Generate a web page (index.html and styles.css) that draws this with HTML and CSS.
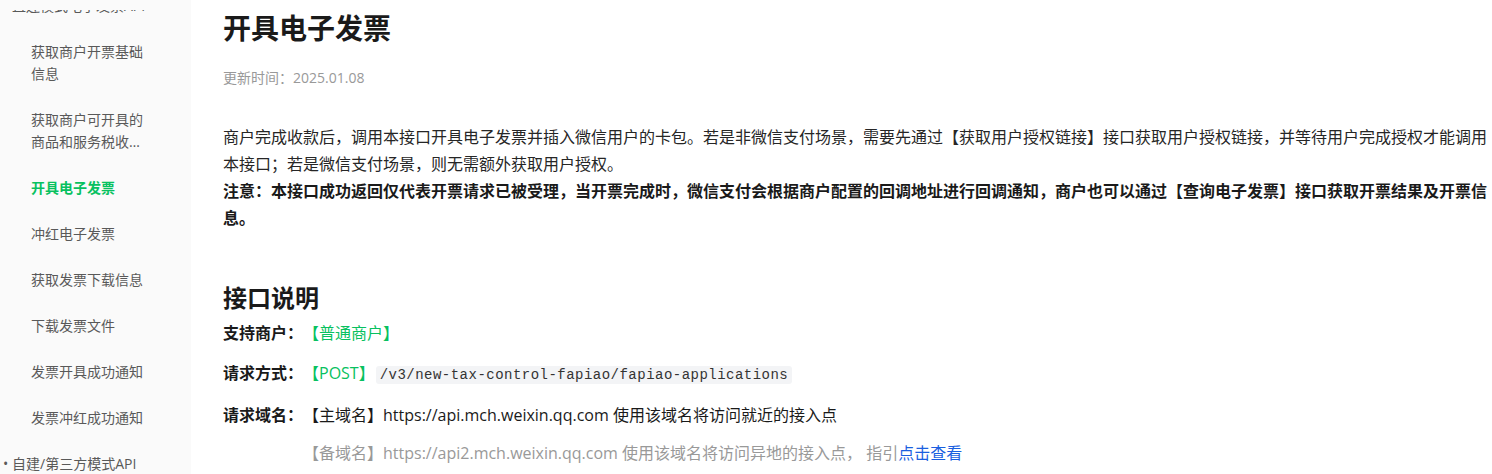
FILE: index.html
```html
<!DOCTYPE html>
<html lang="zh-CN">
<head>
<meta charset="utf-8">
<title>开具电子发票</title>
<link rel="stylesheet" href="styles.css">
</head>
<body>
<div class="page">
  <aside class="sidebar">
    <div class="sidebar-mask"></div>
    <ul class="nav">
      <li class="nav-cat"><span class="dot">•</span><span>直连模式电子发票API</span></li>
      <li class="nav-item"><span class="clamp">获取商户开票基础信息</span></li>
      <li class="nav-item"><span class="clamp">获取商户可开具的商品和服务税收分类编码</span></li>
      <li class="nav-item active"><span class="clamp">开具电子发票</span></li>
      <li class="nav-item"><span class="clamp">冲红电子发票</span></li>
      <li class="nav-item"><span class="clamp">获取发票下载信息</span></li>
      <li class="nav-item"><span class="clamp">下载发票文件</span></li>
      <li class="nav-item"><span class="clamp">发票开具成功通知</span></li>
      <li class="nav-item"><span class="clamp">发票冲红成功通知</span></li>
      <li class="nav-cat"><span class="dot">•</span><span>自建/第三方模式API</span></li>
    </ul>
  </aside>
  <main class="content">
    <h1 class="title">开具电子发票</h1>
    <div class="meta">更新时间：2025.01.08</div>
    <p class="desc">商户完成收款后，调用本接口开具电子发票并插入微信用户的卡包。若是非微信支付场景，需要先通过【获取用户授权链接】接口获取用户授权链接，并等待用户完成授权才能调用本接口；若是微信支付场景，则无需额外获取用户授权。<br><strong>注意：本接口成功返回仅代表开票请求已被受理，当开票完成时，微信支付会根据商户配置的回调地址进行回调通知，商户也可以通过【查询电子发票】接口获取开票结果及开票信息。</strong></p>
    <h2 class="section">接口说明</h2>
    <div class="row"><strong>支持商户：</strong><span class="green">【普通商户】</span></div>
    <div class="row"><strong>请求方式：</strong><span class="green">【POST】</span><code class="code">/v3/new-tax-control-fapiao/fapiao-applications</code></div>
    <div class="row"><strong>请求域名：</strong>【主域名】https://api.mch.weixin.qq.com 使用该域名将访问就近的接入点</div>
    <div class="row backup">【备域名】https://api2.mch.weixin.qq.com 使用该域名将访问异地的接入点， 指引<a class="link" href="#">点击查看</a></div>
  </main>
</div>
</body>
</html>
```
FILE: styles.css
```css
html, body {
  margin: 0;
  padding: 0;
  background: #ffffff;
}
body {
  font-family: "Open Sans", "Noto Sans CJK SC", sans-serif;
  color: #1a1a1a;
  height: 474px;
  overflow: hidden;
  text-spacing-trim: space-all;
}
.page {
  display: flex;
  height: 474px;
}
.sidebar {
  position: relative;
  width: 191px;
  flex: 0 0 191px;
  background: #fafafa;
  overflow: hidden;
}
.sidebar-mask {
  position: absolute;
  top: 0;
  left: 0;
  right: 0;
  height: 10px;
  background: #fafafa;
  z-index: 1;
}
.nav {
  list-style: none;
  margin: -17px 0 0 0;
  padding: 0;
  font-size: 14px;
  line-height: 22px;
  color: #595959;
}
.nav-cat {
  display: flex;
  gap: 4px;
  padding: 12px 0 12px 3px;
  white-space: nowrap;
}
.dot {
  width: 5px;
}
.nav-item {
  padding: 12px 40px 12px 31px;
}
.clamp {
  display: -webkit-box;
  -webkit-line-clamp: 2;
  -webkit-box-orient: vertical;
  overflow: hidden;
}
.nav-item.active {
  color: #07c160;
  font-weight: bold;
}
.content {
  flex: 1;
  min-width: 0;
  padding: 8px 0 0 32px;
}
.title {
  margin: 0;
  font-size: 28px;
  line-height: 40px;
  font-weight: bold;
  color: #1a1a1a;
}
.meta {
  margin-top: 20px;
  font-size: 14px;
  line-height: 20px;
  color: #999999;
}
.desc {
  margin: 36px 0 0 0;
  font-size: 16px;
  line-height: 27px;
  color: #262626;
}
.desc strong {
  color: #1a1a1a;
}
.section {
  margin: 50px 0 6px 0;
  font-size: 24px;
  line-height: 32px;
  font-weight: bold;
  color: #1a1a1a;
}
.row {
  font-size: 16px;
  line-height: 26px;
  margin-bottom: 14px;
  color: #1a1a1a;
  white-space: nowrap;
}
.row strong {
  font-weight: bold;
}
.green {
  color: #07c160;
}
.code {
  font-family: "Liberation Mono", "DejaVu Sans Mono", monospace;
  font-size: 14px;
  letter-spacing: 0.48px;
  color: #333333;
  background: #f3f4f6;
  border-radius: 3px;
  padding: 1px 4px;
  margin-left: 1px;
}
.backup {
  margin-top: -2px;
  padding-left: 80px;
  color: #999999;
}
.link {
  color: #1a5fe0;
  text-decoration: none;
}
```
